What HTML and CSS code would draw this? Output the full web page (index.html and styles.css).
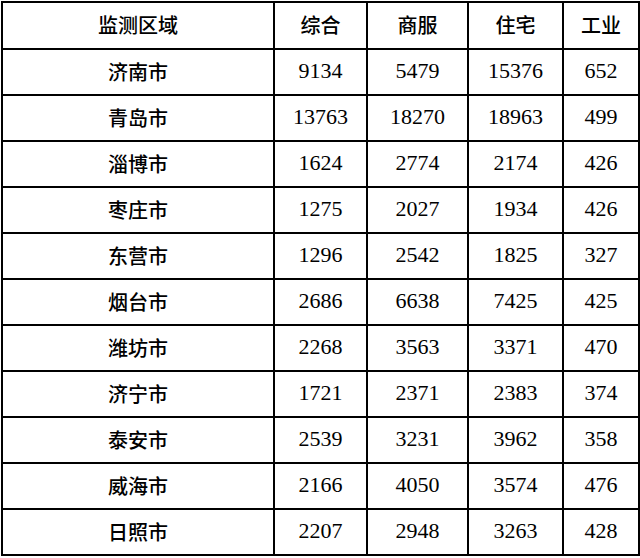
FILE: index.html
```html
<!DOCTYPE html>
<html lang="zh">
<head>
<meta charset="utf-8">
<link rel="stylesheet" href="styles.css">
</head>
<body>
<div class="wrap">
<table class="grid">
<colgroup>
<col class="c1"><col class="c2"><col class="c3"><col class="c4"><col class="c5">
</colgroup>
<thead>
<tr class="head"><th>监测区域</th><th>综合</th><th>商服</th><th>住宅</th><th>工业</th></tr>
</thead>
<tbody>
<tr><td class="city">济南市</td><td>9134</td><td>5479</td><td>15376</td><td>652</td></tr>
<tr><td class="city">青岛市</td><td>13763</td><td>18270</td><td>18963</td><td>499</td></tr>
<tr><td class="city">淄博市</td><td>1624</td><td>2774</td><td>2174</td><td>426</td></tr>
<tr><td class="city">枣庄市</td><td>1275</td><td>2027</td><td>1934</td><td>426</td></tr>
<tr><td class="city">东营市</td><td>1296</td><td>2542</td><td>1825</td><td>327</td></tr>
<tr><td class="city">烟台市</td><td>2686</td><td>6638</td><td>7425</td><td>425</td></tr>
<tr><td class="city">潍坊市</td><td>2268</td><td>3563</td><td>3371</td><td>470</td></tr>
<tr><td class="city">济宁市</td><td>1721</td><td>2371</td><td>2383</td><td>374</td></tr>
<tr><td class="city">泰安市</td><td>2539</td><td>3231</td><td>3962</td><td>358</td></tr>
<tr><td class="city">威海市</td><td>2166</td><td>4050</td><td>3574</td><td>476</td></tr>
<tr><td class="city">日照市</td><td>2207</td><td>2948</td><td>3263</td><td>428</td></tr>
</tbody>
</table>
</div>
</body>
</html>
```
FILE: styles.css
```css
html, body {
  margin: 0;
  padding: 0;
  background: #fff;
}
.wrap {
  padding: 1px 0 0 1px;
}
.grid {
  border-collapse: collapse;
  table-layout: fixed;
  width: 637px;
  color: #000;
  font-family: "Liberation Serif", "Noto Sans CJK SC", serif;
  font-size: 22px;
}
.c1 { width: 272px; }
.c2 { width: 93px; }
.c3 { width: 101px; }
.c4 { width: 95px; }
.c5 { width: 76px; }
.grid th, .grid td {
  border: 2px solid #000;
  text-align: center;
  vertical-align: middle;
  padding: 0 0 2px 0;
  height: 46px;
  box-sizing: border-box;
}
.grid th {
  font-family: "Noto Sans CJK SC", sans-serif;
  font-weight: 500;
  font-size: 20px;
}
.grid td.city {
  font-family: "Noto Sans CJK SC", sans-serif;
  font-weight: 500;
  font-size: 20px;
}
.head th {
  height: 47px;
}
```
